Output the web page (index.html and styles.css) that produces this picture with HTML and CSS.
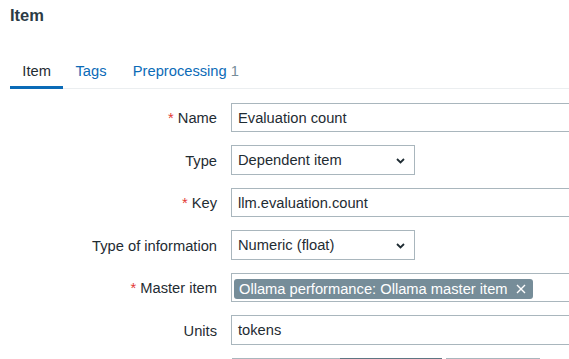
FILE: index.html
```html
<!DOCTYPE html>
<html lang="en">
<head>
<meta charset="utf-8">
<title>Item</title>
<link rel="stylesheet" href="styles.css">
</head>
<body>
<header class="header">
  <h1 class="title">Item</h1>
</header>
<ul class="tabs">
  <li class="tab tab-active">Item</li>
  <li class="tab"><a class="tab-link">Tags</a></li>
  <li class="tab"><a class="tab-link">Preprocessing</a> <span class="tab-count">1</span></li>
</ul>
<div class="form">
  <div class="row">
    <div class="label"><span class="req">*</span> Name</div>
    <div class="textbox wide">Evaluation count</div>
  </div>
  <div class="row">
    <div class="label">Type</div>
    <div class="select">Dependent item
      <svg class="chevron" width="9" height="6" viewBox="0 0 9 6"><polyline points="1,1 4.5,4.5 8,1" fill="none" stroke="#1f2c33" stroke-width="1.8"/></svg>
    </div>
  </div>
  <div class="row">
    <div class="label"><span class="req">*</span> Key</div>
    <div class="textbox wide">llm.evaluation.count</div>
  </div>
  <div class="row">
    <div class="label">Type of information</div>
    <div class="select">Numeric (float)
      <svg class="chevron" width="9" height="6" viewBox="0 0 9 6"><polyline points="1,1 4.5,4.5 8,1" fill="none" stroke="#1f2c33" stroke-width="1.8"/></svg>
    </div>
  </div>
  <div class="row">
    <div class="label"><span class="req">*</span> Master item</div>
    <div class="multiselect wide">
      <span class="chip">Ollama performance: Ollama master item
        <svg class="chip-x" width="10" height="10" viewBox="0 0 10 10"><path d="M1 1 L9 9 M9 1 L1 9" stroke="#fff" stroke-width="1.4" fill="none"/></svg>
      </span>
    </div>
  </div>
  <div class="row">
    <div class="label">Units</div>
    <div class="textbox wide">tokens</div>
  </div>
  <div class="row">
    <div class="label"></div>
    <div class="radios">
      <span class="radio"></span>
      <span class="radio radio-on"></span>
    </div>
    <div class="textbox small"></div>
  </div>
</div>
</body>
</html>
```

FILE: styles.css
```css
html, body {
  margin: 0;
  padding: 0;
  overflow: hidden;
  background: #ffffff;
}

body {
  font-family: "Liberation Sans", Arial, sans-serif;
  font-size: 14.7px;
  color: #1f2c33;
  width: 569px;
  height: 359px;
}

.header {
  padding: 4.5px 10px 0;
}

.title {
  margin: 0;
  font-size: 16.5px;
  line-height: 20px;
  font-weight: bold;
  color: #2c3b45;
}

.tabs {
  display: flex;
  list-style: none;
  margin: 36.6px 0 0 10px;
  padding: 0;
  border-bottom: 1px solid #ebeef0;
}

.tab {
  padding: 0 12.3px 5px;
  line-height: 20px;
  border-bottom: 3px solid transparent;
  margin-bottom: -1px;
  white-space: nowrap;
}

.tab + .tab + .tab {
  padding-left: 14px;
}

.tab-active {
  border-bottom-color: #0b6bb7;
  color: #1f2c33;
}

.tab-link {
  color: #0b6bb7;
}

.tab-count {
  color: #768d99;
}

.form {
  margin-top: 13.9px;
}

.row {
  display: flex;
  align-items: center;
  gap: 14px;
  height: 29.5px;
  margin-bottom: 13px;
  white-space: nowrap;
}

.label {
  width: 217px;
  flex: none;
  text-align: right;
  padding-top: 1px;
}

.req {
  color: #e33734;
}

.textbox,
.select,
.multiselect {
  box-sizing: border-box;
  height: 29.5px;
  border: 1px solid #a9b6bd;
  line-height: 27.5px;
  padding: 1px 6px 0;
  flex: none;
  background: #fff;
}

.wide {
  width: 560px;
}

.select {
  width: 184px;
  display: flex;
  align-items: center;
  justify-content: space-between;
  padding-right: 9px;
}

.chevron {
  display: block;
}

.multiselect {
  display: flex;
  align-items: center;
  padding: 2px 2px 0;
}

.chip {
  display: inline-flex;
  align-items: center;
  gap: 8px;
  height: 20px;
  line-height: 20px;
  padding: 0 7px 0 5px;
  border-radius: 3px;
  background: #768d99;
  color: #ffffff;
}

.chip-x {
  display: block;
}

.radios {
  display: flex;
  flex: none;
  margin-left: 1px;
}

.radio {
  box-sizing: border-box;
  height: 29.5px;
  border: 1px solid #a9b6bd;
  width: 109px;
}

.radio-on {
  width: 102px;
  border-color: #5f7683;
  background: #768d99;
  margin-left: -1px;
}

.small {
  width: 94px;
  margin-left: -10px;
}
```
